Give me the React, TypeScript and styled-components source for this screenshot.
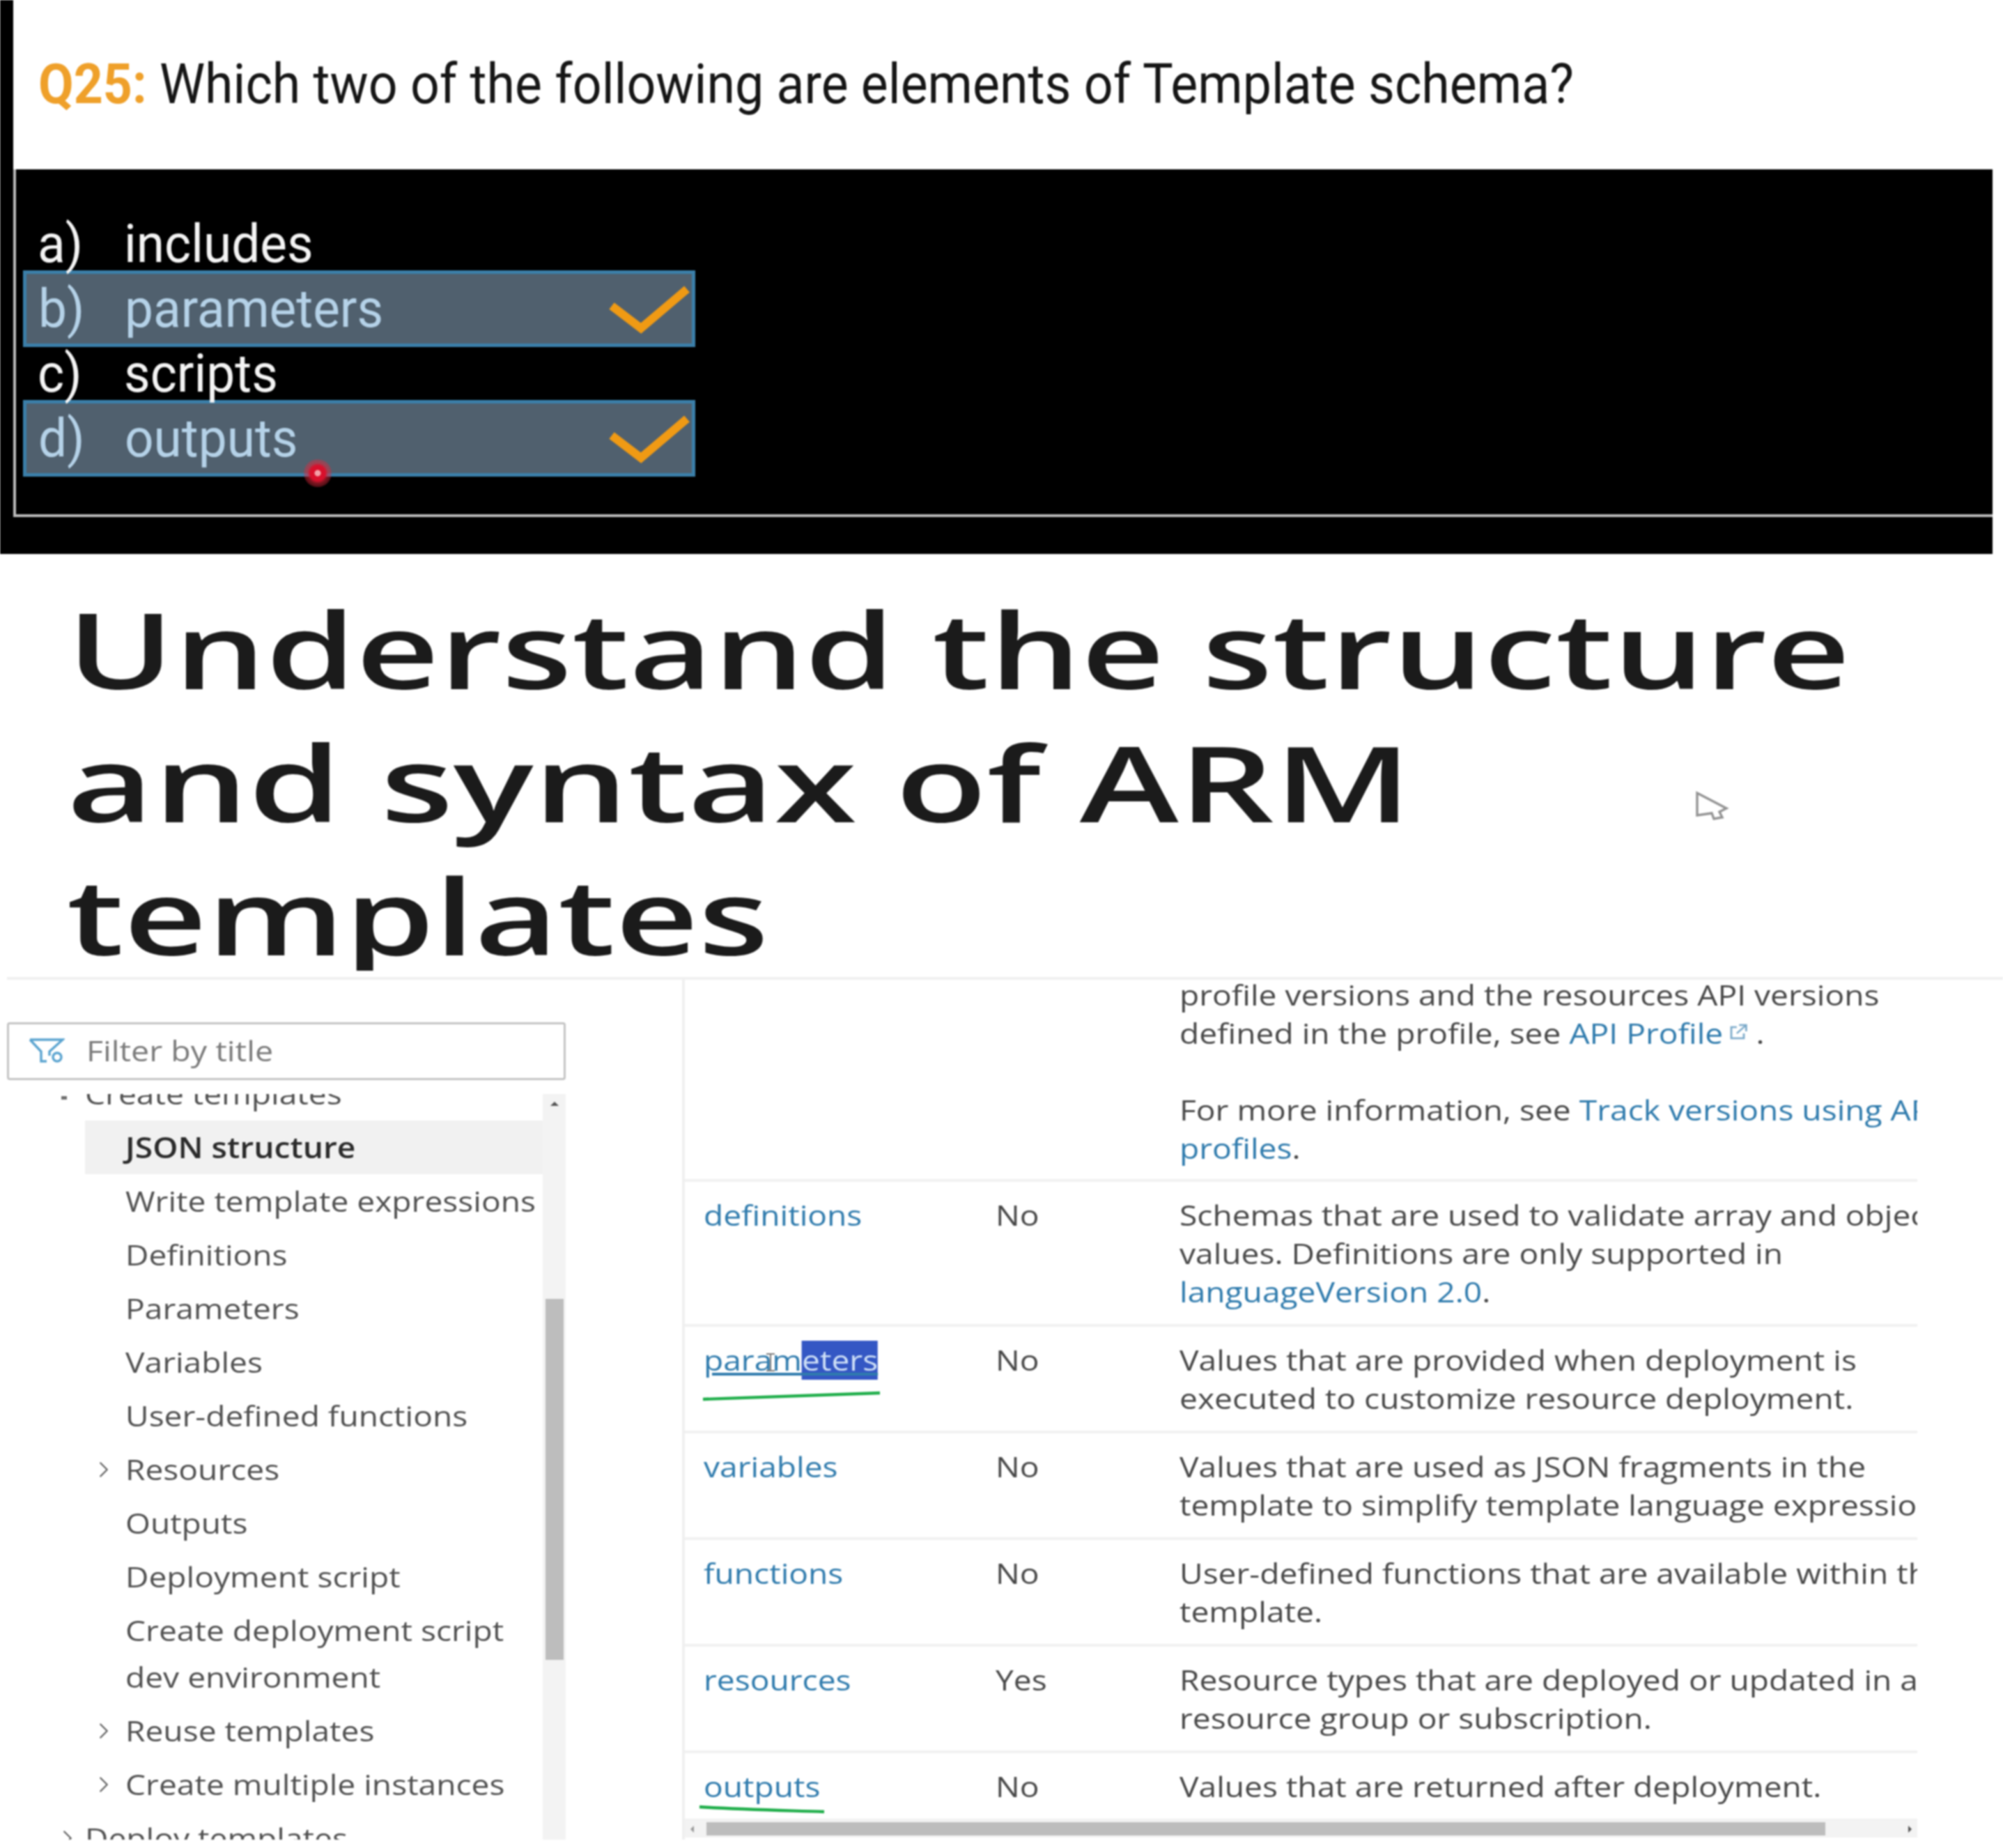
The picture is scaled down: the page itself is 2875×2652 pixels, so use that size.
import React from 'react';
import styled, { createGlobalStyle } from 'styled-components';
import { ChevronRight } from 'lucide-react';

const GlobalStyle = createGlobalStyle`
  html, body {
    margin: 0;
    padding: 0;
    background: #ffffff;
  }
  * {
    box-sizing: border-box;
  }
`;

const Page = styled.div`
  position: relative;
  width: 2875px;
  height: 2652px;
  overflow: hidden;
  background: #ffffff;
  filter: blur(0.8px);
`;

// quiz slide
const Slide = styled.section`
  width: 2860px;
  height: 795px;
  padding-left: 19px;
  background: #000000;
`;

const QuestionBar = styled.div`
  height: 243px;
  padding: 78px 0 0 36px;
  background: #ffffff;
  font-family: Roboto, sans-serif;
  font-size: 79px;
  line-height: 86px;
  color: #161616;
  white-space: nowrap;
`;

const Squeezed = styled.span<{ $x: number }>`
  display: inline-block;
  transform: scaleX(${(p) => p.$x});
  transform-origin: left center;
  white-space: nowrap;
`;

const QuestionNumber = styled.span`
  color: #efa02a;
  font-weight: 700;
`;

const AnswerBox = styled.div`
  height: 499px;
  padding: 69px 0 0 10px;
  border-left: 4px solid #b9b9b9;
  border-bottom: 4px solid #b9b9b9;
  font-family: Roboto, sans-serif;
  font-size: 76px;
`;

const Answer = styled.div<{ $picked?: boolean }>`
  display: flex;
  align-items: center;
  width: 965px;
  height: ${(p) => (p.$picked ? '110px' : '76px')};
  padding: 0 1px 0 ${(p) => (p.$picked ? '17px' : '21px')};
  color: ${(p) => (p.$picked ? '#b5d2e8' : '#f4f4f4')};
  background: ${(p) => (p.$picked ? '#50606e' : 'transparent')};
  border: ${(p) => (p.$picked ? '5px solid #3b7fa9' : '0')};
`;

const AnswerLetter = styled.div`
  width: 124px;
  flex-shrink: 0;
  transform: scaleX(0.96);
  transform-origin: left center;
`;

const AnswerText = styled.div`
  flex: 1;
  transform: scaleX(0.96);
  transform-origin: left center;
`;

const CheckMark = () => (
  <svg width="118" height="72" viewBox="0 0 118 72">
    <polyline points="4,32 46,64 112,8" fill="none" stroke="#f09a14" strokeWidth="12" strokeLinejoin="miter" />
  </svg>
);

const RedDot = styled.div`
  position: absolute;
  left: 436px;
  top: 659px;
  width: 40px;
  height: 40px;
  border-radius: 50%;
  background: radial-gradient(circle, #f4a0a8 0 14%, #d8102c 18% 38%, rgba(226, 40, 60, 0.55) 52%, rgba(226, 40, 60, 0) 100%);
`;

// article heading
const Heading = styled.h1`
  height: 598px;
  margin: 0;
  padding: 41px 0 0 96px;
  overflow: hidden;
  font-family: 'Open Sans', sans-serif;
  font-size: 150px;
  font-weight: 600;
  line-height: 191px;
  color: #1b1b1b;
`;

const HeadingLine = styled.div<{ $x: number }>`
  height: 191px;
  white-space: nowrap;
  transform: scaleX(${(p) => p.$x});
  transform-origin: left center;
`;

const Pointer = styled.svg`
  position: absolute;
  left: 2432px;
  top: 1132px;
`;

const Docs = styled.div`
  display: flex;
  height: 1246px;
  margin-top: 9px;
  border-top: 4px solid #f0f0f0;
  margin-left: 10px;
  font-family: 'Open Sans', sans-serif;
  font-size: 41px;
`;

// table of contents
const Sidebar = styled.aside`
  display: flex;
  flex-direction: column;
  width: 969px;
  flex-shrink: 0;
`;

const FilterBox = styled.div`
  display: flex;
  align-items: center;
  gap: 31px;
  width: 802px;
  height: 83px;
  margin-top: 61px;
  padding: 0 0 3px 28px;
  background: #ffffff;
  border: 3px solid #c4c4c4;
  border-radius: 4px;
  color: #7a7a7a;
`;

const TreeFrame = styled.div`
  display: flex;
  width: 802px;
  height: 1070px;
  margin-top: 20px;
`;

const Tree = styled.div`
  flex: 1;
  overflow: hidden;
`;

const TreeList = styled.div`
  margin-top: -39px;
`;

const TreeRow = styled.div<{ $depth: number; $active?: boolean }>`
  display: flex;
  align-items: flex-start;
  margin-left: ${(p) => (p.$depth === 2 ? '112px' : '0')};
  padding: 5px 0 5px ${(p) => (p.$depth === 2 ? '58px' : '112px')};
  position: relative;
  color: ${(p) => (p.$active ? '#2b2b2b' : '#505050')};
  background: ${(p) => (p.$active ? '#f1f1f1' : 'transparent')};
  font-weight: ${(p) => (p.$active ? 600 : 400)};
  line-height: 67px;
  white-space: nowrap;
`;

const TreeLabel = styled.div`
  transform: scaleX(1.125);
  transform-origin: left center;
`;

const Caret = styled.span<{ $depth: number }>`
  position: absolute;
  left: ${(p) => (p.$depth === 2 ? '8px' : '68px')};
  top: 20px;
  display: flex;
  color: #606060;
`;

const TreeBullet = styled.span`
  position: absolute;
  left: 78px;
  top: 42px;
  width: 8px;
  height: 5px;
  background: #707070;
`;

const ScrollTrack = styled.div`
  position: relative;
  width: 33px;
  flex-shrink: 0;
  background: #f3f3f3;
`;

const ScrollThumb = styled.div`
  position: absolute;
  left: 4px;
  top: 294px;
  width: 26px;
  height: 518px;
  background: #bdbdbd;
`;

const ScrollUp = styled.div`
  position: absolute;
  left: 11px;
  top: 11px;
  border-left: 6px solid transparent;
  border-right: 6px solid transparent;
  border-bottom: 6px solid #555555;
`;

// parameter table
const TableArea = styled.div`
  position: relative;
  width: 1773px;
  height: 1234px;
  border-left: 4px solid #f0f0f0;
  overflow: hidden;
`;

const TableRow = styled.div<{ $first?: boolean }>`
  display: grid;
  grid-template-columns: 419px 264px 1fr;
  padding: ${(p) => (p.$first ? '0 0 17px 27px' : '20px 0 19px 27px')};
  margin-top: ${(p) => (p.$first ? '-6px' : '0')};
  border-bottom: 4px solid #f1f1f1;
  line-height: 55px;
  color: #484848;
`;

const Cell = styled.div`
  overflow: hidden;
  white-space: nowrap;
`;

const CellText = styled.div`
  transform: scaleX(1.125);
  transform-origin: left center;
`;

const Gap = styled.div`
  height: 55px;
`;

const DocLink = styled.span`
  color: #2f7bad;
`;

const NameLink = styled(DocLink)<{ $underlined?: boolean }>`
  text-decoration: ${(p) => (p.$underlined ? 'underline' : 'none')};
`;

const Selected = styled.span`
  background: #3457c4;
  color: #cfe0f7;
  padding: 1px 0;
`;

const Scribble = styled.svg`
  position: absolute;
  left: 0;
  top: 0;
`;

const ExternalIcon = () => (
  <svg width="26" height="26" viewBox="0 0 26 26" style={{ margin: '0 10px 0 6px', verticalAlign: '4px' }}>
    <path d="M11 6H4v16h16v-7M14 3h9v9M23 3 11 15" fill="none" stroke="#7aa9c9" strokeWidth="2.4" />
  </svg>
);

const HScroll = styled.div`
  position: absolute;
  left: 0;
  top: 1206px;
  display: flex;
  align-items: center;
  justify-content: space-between;
  width: 100%;
  height: 25px;
  padding: 0 8px;
  background: #f3f3f3;
`;

const HThumb = styled.div`
  position: absolute;
  left: 31px;
  top: 3px;
  width: 1606px;
  height: 19px;
  background: #bdbdbd;
`;

const HArrow = styled.div<{ $right?: boolean }>`
  border-top: 5px solid transparent;
  border-bottom: 5px solid transparent;
  ${(p) => (p.$right ? 'border-left: 5px solid #555555;' : 'border-right: 5px solid #999999;')}
`;

const FilterIcon = () => (
  <svg width="52" height="36" viewBox="0 0 52 36" fill="none" stroke="#5ba4d0" strokeWidth="3.4">
    <path d="M2 3h47L30 20v6M2 3l16 17v14h8" />
    <circle cx="41" cy="28" r="6" />
  </svg>
);

const tree = [
  { label: 'Create templates', depth: 1, caret: 'bullet' },
  { label: 'JSON structure', depth: 2, active: true },
  { label: 'Write template expressions', depth: 2 },
  { label: 'Definitions', depth: 2 },
  { label: 'Parameters', depth: 2 },
  { label: 'Variables', depth: 2 },
  { label: 'User-defined functions', depth: 2 },
  { label: 'Resources', depth: 2, caret: 'chevron' },
  { label: 'Outputs', depth: 2 },
  { label: 'Deployment script', depth: 2 },
  { label: 'Create deployment script\ndev environment', depth: 2 },
  { label: 'Reuse templates', depth: 2, caret: 'chevron' },
  { label: 'Create multiple instances', depth: 2, caret: 'chevron' },
  { label: 'Deploy templates', depth: 1, caret: 'chevron' },
];

const rows = [
  { name: 'definitions', required: 'No', lines: ['Schemas that are used to validate array and objects', 'values. Definitions are only supported in'], link: 'languageVersion 2.0' },
  { name: 'parameters', required: 'No', lines: ['Values that are provided when deployment is', 'executed to customize resource deployment.'] },
  { name: 'variables', required: 'No', lines: ['Values that are used as JSON fragments in the', 'template to simplify template language expressions'] },
  { name: 'functions', required: 'No', lines: ['User-defined functions that are available within the', 'template.'] },
  { name: 'resources', required: 'Yes', lines: ['Resource types that are deployed or updated in a', 'resource group or subscription.'] },
  { name: 'outputs', required: 'No', lines: ['Values that are returned after deployment.'] },
];

const App = () => {
  return (
    <Page>
      <GlobalStyle />
      <Slide>
        <QuestionBar>
          <Squeezed $x={0.93}>
            <QuestionNumber>Q25:</QuestionNumber> Which two of the following are elements of Template schema?
          </Squeezed>
        </QuestionBar>
        <AnswerBox>
          <Answer>
            <AnswerLetter>a)</AnswerLetter>
            <AnswerText>includes</AnswerText>
          </Answer>
          <Answer $picked>
            <AnswerLetter>b)</AnswerLetter>
            <AnswerText>parameters</AnswerText>
            <CheckMark />
          </Answer>
          <Answer>
            <AnswerLetter>c)</AnswerLetter>
            <AnswerText>scripts</AnswerText>
          </Answer>
          <Answer $picked>
            <AnswerLetter>d)</AnswerLetter>
            <AnswerText>outputs</AnswerText>
            <CheckMark />
          </Answer>
        </AnswerBox>
      </Slide>
      <RedDot />

      <Heading>
        <HeadingLine $x={1.383}>Understand the structure</HeadingLine>
        <HeadingLine $x={1.431}>and syntax of ARM</HeadingLine>
        <HeadingLine $x={1.38}>templates</HeadingLine>
      </Heading>
      <Pointer width="52" height="48" viewBox="0 0 52 48" fill="#ffffff" stroke="#949494" strokeWidth="3.4">
        <path d="M4 6v32l21-3 3 8 12-2-4-8 10-5z" />
      </Pointer>

      <Docs>
        <Sidebar>
          <FilterBox>
            <FilterIcon />
            <Squeezed $x={1.135}>Filter by title</Squeezed>
          </FilterBox>
          <TreeFrame>
            <Tree>
              <TreeList>
                {tree.map((item) => (
                  <TreeRow key={item.label} $depth={item.depth} $active={item.active}>
                    {item.caret === 'bullet' && <TreeBullet />}
                    {item.caret === 'chevron' && (
                      <Caret $depth={item.depth}>
                        <ChevronRight size={38} strokeWidth={1.4} />
                      </Caret>
                    )}
                    <TreeLabel>
                      {item.label.split('\n').map((line) => (
                        <div key={line}>{line}</div>
                      ))}
                    </TreeLabel>
                  </TreeRow>
                ))}
              </TreeList>
            </Tree>
            <ScrollTrack>
              <ScrollUp />
              <ScrollThumb />
            </ScrollTrack>
          </TreeFrame>
        </Sidebar>

        <TableArea>
          <TableRow $first>
            <Cell />
            <Cell />
            <Cell>
              <CellText>
                <div>profile versions and the resources API versions</div>
                <div>
                  defined in the profile, see <DocLink>API Profile</DocLink>
                  <ExternalIcon />.
                </div>
                <Gap />
                <div>
                  For more information, see <DocLink>Track versions using API</DocLink>
                </div>
                <div>
                  <DocLink>profiles</DocLink>.
                </div>
              </CellText>
            </Cell>
          </TableRow>
          {rows.map((row) => (
            <TableRow key={row.name}>
              <Cell>
                <CellText>
                  {row.name === 'parameters' ? (
                    <NameLink $underlined>
                      param<Selected>eters</Selected>
                    </NameLink>
                  ) : (
                    <NameLink>{row.name}</NameLink>
                  )}
                </CellText>
              </Cell>
              <Cell>
                <CellText>{row.required}</CellText>
              </Cell>
              <Cell>
                <CellText>
                  {row.lines.map((line) => (
                    <div key={line}>{line}</div>
                  ))}
                  {row.link && (
                    <div>
                      <DocLink>{row.link}</DocLink>.
                    </div>
                  )}
                </CellText>
              </Cell>
            </TableRow>
          ))}
          <Scribble width="300" height="1240" viewBox="0 0 300 1240" fill="none" stroke="#1fae4a" strokeWidth="4.4">
            <path d="M26 602 280 593" />
            <path d="M21 1187C80 1191 140 1192 200 1194" />
            <path d="M117 537h12M123 537v24M117 561h12" stroke="#7a7a7a" strokeWidth="2" />
          </Scribble>
          <HScroll>
            <HArrow />
            <HThumb />
            <HArrow $right />
          </HScroll>
        </TableArea>
      </Docs>
    </Page>
  );
};

export default App;
